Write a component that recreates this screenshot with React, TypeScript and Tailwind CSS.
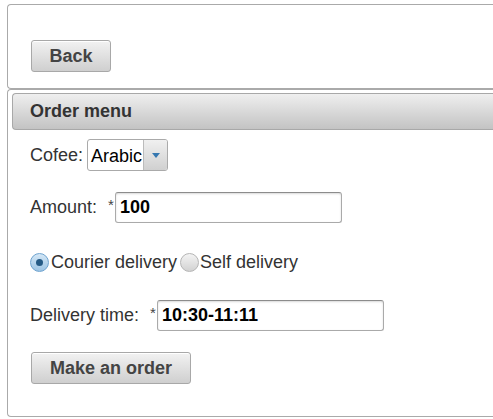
const font = { fontFamily: '"Liberation Sans", Arial, sans-serif' };

function Button({ label, width }: { label: string; width: string }) {
  return (
    <button
      className={`${width} h-[32px] rounded-[3px] border border-[#a8a8a8] bg-gradient-to-b from-[#f2f2f2] to-[#cfcfcf] text-[18px] font-bold text-[#444] shadow-[inset_0_1px_0_#fff]`}
    >
      {label}
    </button>
  );
}

function Radio({ checked }: { checked: boolean }) {
  if (checked) {
    return (
      <span className="flex h-[19px] w-[19px] shrink-0 items-center justify-center rounded-full border border-[#6ea3cf] bg-gradient-to-b from-[#d4e7f6] to-[#9cc4e4]">
        <span className="h-[7px] w-[7px] rounded-full bg-[#245a85]" />
      </span>
    );
  }
  return (
    <span className="block h-[19px] w-[19px] shrink-0 rounded-full border border-[#b5b5b5] bg-gradient-to-b from-[#f4f4f4] to-[#d2d2d2]" />
  );
}

function TextField({ value }: { value: string }) {
  return (
    <div className="flex h-[31px] w-[227px] items-center rounded-[3px] border border-[#aaa] border-t-[#8c8c8c] bg-white pl-[4px] shadow-[inset_0_1px_2px_rgba(0,0,0,0.15)]">
      <span className="text-[18px] font-bold text-black">{value}</span>
    </div>
  );
}

export default function App() {
  return (
    <div className="bg-white pl-[7px] pt-[4px] text-[18px] text-[#333]" style={font}>
      <div className="h-[85px] rounded-l-[4px] border-y border-l border-[#aaa] pl-[23px] pt-[35px]">
        <Button label="Back" width="w-[80px]" />
      </div>

      <div className="rounded-l-[4px] border-y border-l border-[#aaa] pb-[32px] pl-[4px] pt-[3px]">
        <div className="flex h-[37px] items-center rounded-l-[4px] border-y border-l border-[#a8a8a8] bg-gradient-to-b from-[#efefef] to-[#c3c3c3] pl-[17px]">
          <span className="text-[18px] font-bold text-[#333]">Order menu</span>
        </div>

        <div className="pl-[18px]">
          <div className="mt-[9px] flex h-[32px] items-center">
            <span className="mr-[4px]">Cofee:</span>
            <div className="flex h-[32px] w-[81px] overflow-hidden rounded-[3px] border border-[#aaa] bg-white">
              <span className="w-[55px] overflow-hidden whitespace-nowrap pl-[3px] pt-[3px] text-black">
                Arabic
              </span>
              <span className="flex flex-1 items-center justify-center border-l border-[#bbb] bg-gradient-to-b from-[#f0f0f0] to-[#d0d0d0]">
                <svg width="8" height="5" viewBox="0 0 8 5">
                  <path d="M0 0h8L4 5z" fill="#3577b0" />
                </svg>
              </span>
            </div>
          </div>

          <div className="mt-[21px] flex h-[31px] items-center">
            <span className="mr-[11px]">Amount:</span>
            <span className="-mt-[4px] mr-[1px] text-[15px] text-[#444]">*</span>
            <TextField value="100" />
          </div>

          <div className="mt-[29px] flex h-[20px] items-center">
            <Radio checked />
            <span className="ml-[2px]">Courier delivery</span>
            <span className="ml-[3px] flex">
              <Radio checked={false} />
            </span>
            <span className="ml-[1px]">Self delivery</span>
          </div>

          <div className="mt-[28px] flex h-[31px] items-center">
            <span className="mr-[11px]">Delivery time:</span>
            <span className="-mt-[4px] mr-[1px] text-[15px] text-[#444]">*</span>
            <TextField value="10:30-11:11" />
          </div>

          <div className="mt-[21px] pl-[1px]">
            <Button label="Make an order" width="w-[160px]" />
          </div>
        </div>
      </div>
    </div>
  );
}
